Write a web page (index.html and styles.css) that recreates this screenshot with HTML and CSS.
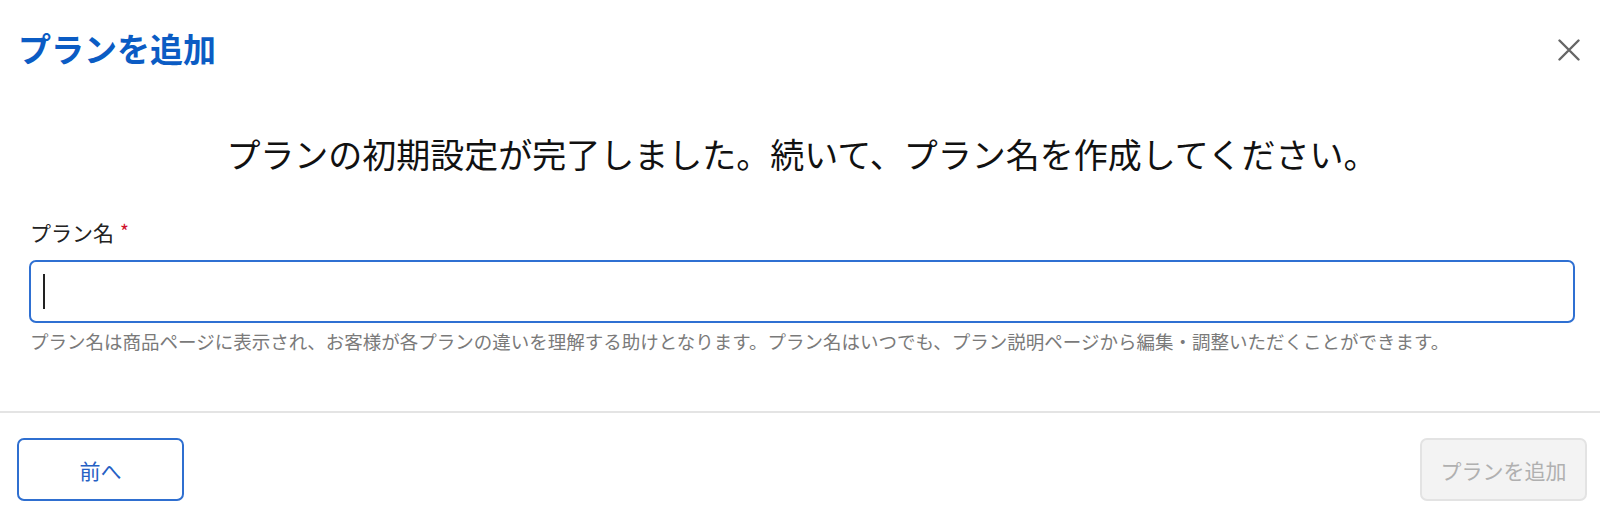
FILE: index.html
```html
<!DOCTYPE html>
<html lang="ja">
<head>
  <meta charset="UTF-8" />
  <meta name="viewport" content="width=device-width, initial-scale=1" />
  <title>プランを追加</title>
  <link rel="stylesheet" href="styles.css">
</head>
<body>
  <div class="modal">
    <div class="modal-header">
      <h1 class="modal-title">プランを追加</h1>
      <button class="close-btn" aria-label="閉じる">
        <svg width="22" height="22" viewBox="0 0 22 22">
          <path d="M1.5 1.5 L20.5 20.5 M20.5 1.5 L1.5 20.5" stroke="#666666" stroke-width="2.4" stroke-linecap="round" fill="none" />
        </svg>
      </button>
    </div>

    <div class="modal-body">
      <p class="lead">プランの初期設定が完了しました。続いて、プラン名を作成してください。</p>

      <div class="field">
        <label class="field-label">プラン名<span class="required">*</span></label>
        <div class="input-box"><span class="caret"></span></div>
        <p class="field-help">プラン名は商品ページに表示され、お客様が各プランの違いを理解する助けとなります。プラン名はいつでも、プラン説明ページから編集・調整いただくことができます。</p>
      </div>
    </div>

    <div class="modal-footer">
      <button class="btn btn-back">前へ</button>
      <button class="btn btn-add" disabled>プランを追加</button>
    </div>
  </div>
</body>
</html>
```

FILE: styles.css
```css
body {
  margin: 0;
  background: #ffffff;
  color: #222222;
  font-family: "Noto Sans CJK JP", "Noto Sans", sans-serif;
}

.modal {
  width: 1600px;
  height: 520px;
  display: flex;
  flex-direction: column;
}

.modal-header {
  display: flex;
  justify-content: space-between;
  align-items: center;
  padding: 24px 20px 0 18px;
}

.modal-title {
  margin: 0;
  font-size: 33px;
  line-height: 48px;
  font-weight: bold;
  color: #0b5cc4; /* 見出しの青 */
}

.close-btn {
  background: none;
  border: none;
  padding: 0;
  width: 22px;
  height: 22px;
  margin-top: 3px;
  cursor: pointer;
}

.modal-body {
  flex: 1;
  padding: 0 25px 0 29px;
}

.lead {
  margin: 58px 0 0;
  text-align: center;
  font-size: 34px;
  line-height: 48px;
  color: #111111;
}

.field {
  margin-top: 40px;
}

.field-label {
  display: block;
  padding-left: 1px;
  font-size: 21px;
  line-height: 28px;
  color: #222;
}

.required {
  color: #d0112b;
  margin-left: 6px;
  font-size: 19px;
  position: relative;
  top: -2px;
}

.input-box {
  margin-top: 13px;
  height: 63px;
  box-sizing: border-box;
  border: 2px solid #2f70d2;
  border-radius: 7px;
  padding-left: 12px;
  display: flex;
  align-items: center;
}

.caret {
  width: 1.5px;
  height: 35px;
  background: #222;
}

.field-help {
  margin: 5px 0 0;
  padding-left: 1px;
  font-size: 18.5px;
  line-height: 26px;
  color: #7a7a7a;
}

.modal-footer {
  display: flex;
  justify-content: space-between;
  border-top: 2px solid #e4e4e4;
  padding: 25px 13px 19px 17px;
}

.btn {
  width: 167px;
  height: 63px;
  border-radius: 7px;
  font-family: inherit;
  font-size: 21px;
  cursor: pointer;
}

.btn-back {
  background: #fff;
  border: 2px solid #2f6fd0;
  color: #2560c4;
}

.btn-add {
  background: #f3f3f3;
  border: 2px solid #e3e3e3;
  color: #b0b0b0;
  cursor: default;
}
```
